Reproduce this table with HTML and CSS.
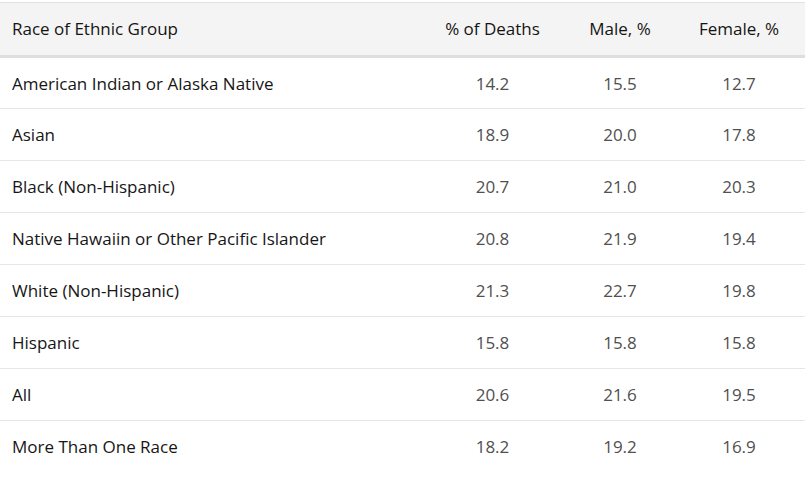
FILE: index.html
```html
<!DOCTYPE html>
<html lang="en">
<head>
<meta charset="utf-8">
<title>Deaths by Race or Ethnic Group</title>
<link rel="stylesheet" href="styles.css">
</head>
<body>
<table class="data-table">
  <thead>
    <tr>
      <th class="col-name">Race of Ethnic Group</th>
      <th class="col-num">% of Deaths</th>
      <th class="col-num">Male, %</th>
      <th class="col-num">Female, %</th>
    </tr>
  </thead>
  <tbody>
    <tr><td class="col-name">American Indian or Alaska Native</td><td class="col-num">14.2</td><td class="col-num">15.5</td><td class="col-num">12.7</td></tr>
    <tr><td class="col-name">Asian</td><td class="col-num">18.9</td><td class="col-num">20.0</td><td class="col-num">17.8</td></tr>
    <tr><td class="col-name">Black (Non-Hispanic)</td><td class="col-num">20.7</td><td class="col-num">21.0</td><td class="col-num">20.3</td></tr>
    <tr><td class="col-name">Native Hawaiin or Other Pacific Islander</td><td class="col-num">20.8</td><td class="col-num">21.9</td><td class="col-num">19.4</td></tr>
    <tr><td class="col-name">White (Non-Hispanic)</td><td class="col-num">21.3</td><td class="col-num">22.7</td><td class="col-num">19.8</td></tr>
    <tr><td class="col-name">Hispanic</td><td class="col-num">15.8</td><td class="col-num">15.8</td><td class="col-num">15.8</td></tr>
    <tr><td class="col-name">All</td><td class="col-num">20.6</td><td class="col-num">21.6</td><td class="col-num">19.5</td></tr>
    <tr><td class="col-name">More Than One Race</td><td class="col-num">18.2</td><td class="col-num">19.2</td><td class="col-num">16.9</td></tr>
  </tbody>
</table>
</body>
</html>
```
FILE: styles.css
```css
html, body {
  margin: 0;
  padding: 0;
  background: #ffffff;
}
body {
  padding-top: 2px;
  font-family: "Open Sans", "Liberation Sans", sans-serif;
  font-size: 17px;
  color: #222;
}
.data-table {
  width: 805px;
  border-collapse: collapse;
  table-layout: fixed;
}
.data-table th,
.data-table td {
  padding: 0 12px;
  height: 52px;
  box-sizing: border-box;
}
.data-table thead tr {
  background: #f4f4f4;
  border-top: 1px solid #e2e2e2;
  border-bottom: 3px solid #dedede;
}
.data-table th {
  font-weight: 400;
  color: #141414;
  height: 54px;
  padding-bottom: 1px;
}
.data-table tbody tr {
  border-bottom: 1px solid #e6e6e6;
}
.data-table tbody tr:last-child {
  border-bottom: none;
}
.col-name {
  text-align: left;
  width: 430px;
}
.col-num {
  text-align: center;
}
.data-table .col-num:last-child {
  padding-right: 24px;
}
th.col-num:nth-child(2) { width: 125px; }
th.col-num:nth-child(3) { width: 130px; }
td.col-num {
  color: #505050;
}
td.col-name {
  color: #161616;
}
```
